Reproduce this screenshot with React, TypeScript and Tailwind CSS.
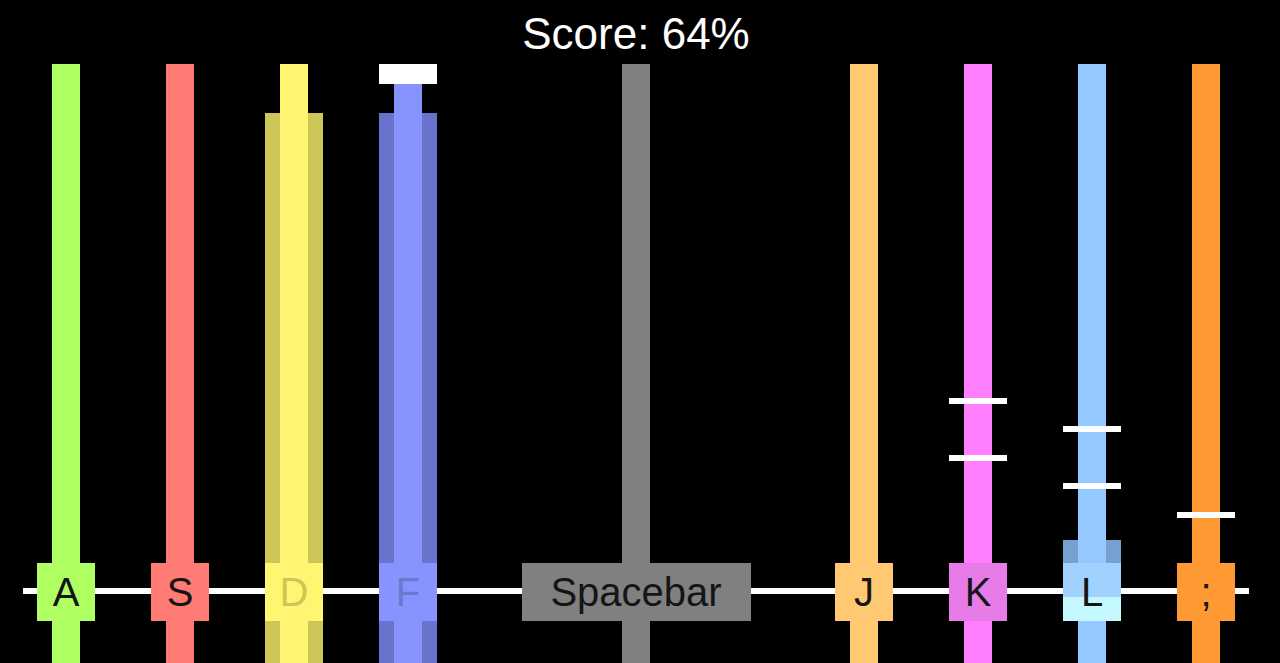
import React from "react";

type Lane = {
  label: string;
  bar: string;
  box: string;
  text: string;
  wide?: string; // wider darker track behind the lane
  cap?: boolean; // white block at the top of the lane
  notes?: number[]; // note offsets from top of the track area
  space?: boolean;
};

// 11 slots of 114px; null = empty slot
const slots: (Lane | null)[] = [
  { label: "A", bar: "bg-[#afff62]", box: "bg-[#afff62]", text: "text-[#151515]" },
  { label: "S", bar: "bg-[#ff7b73]", box: "bg-[#ff7b73]", text: "text-[#151515]" },
  {
    label: "D",
    bar: "bg-[#fff570]",
    box: "bg-[#fff570]",
    text: "text-[#cdc55a]",
    wide: "top-[49px] bottom-0 bg-[#cfc65a]",
  },
  {
    label: "F",
    bar: "bg-[#8794ff]",
    box: "bg-[#8794ff]",
    text: "text-[#6c78cc]",
    wide: "top-[49px] bottom-0 bg-[#6874cc]",
    cap: true,
  },
  null,
  { label: "Spacebar", bar: "bg-[#808080]", box: "bg-[#808080]", text: "text-[#151515]", space: true },
  null,
  { label: "J", bar: "bg-[#ffc972]", box: "bg-[#ffc972]", text: "text-[#151515]" },
  { label: "K", bar: "bg-[#ff7fff]", box: "bg-[#e77ce9]", text: "text-[#151515]", notes: [334, 391] },
  {
    label: "L",
    bar: "bg-[#95c8ff]",
    box: "bg-[linear-gradient(to_bottom,#a1d2ff_34px,#c5f9ff_34px)]",
    text: "text-[#151515]",
    wide: "top-[476px] h-[23px] bg-[#75a0d0]",
    notes: [362, 419],
  },
  { label: ";", bar: "bg-[#ff9933]", box: "bg-[#ff9933]", text: "text-[#151515]", notes: [448] },
];

function LaneColumn({ lane }: { lane: Lane }) {
  return (
    <div className="relative flex h-full w-[114px] shrink-0 flex-col items-center">
      {lane.wide && <div className={`absolute left-[28px] w-[58px] ${lane.wide}`} />}
      <div className={`relative w-[28px] flex-1 ${lane.bar}`} />
      <div
        className={`relative flex h-[58px] shrink-0 items-center justify-center text-[40px] leading-none ${
          lane.space ? "w-[229px]" : "w-[58px]"
        } ${lane.box} ${lane.text}`}
      >
        {lane.label}
      </div>
      <div className={`relative h-[42px] w-[28px] shrink-0 ${lane.bar}`} />
      {lane.cap && <div className="absolute left-[28px] top-0 h-[20px] w-[58px] bg-white" />}
      {lane.notes?.map((t) => (
        <div key={t} className="absolute left-[28px] h-[6px] w-[58px] bg-white" style={{ top: t }} />
      ))}
    </div>
  );
}

export default function App() {
  return (
    <div className="flex h-[663px] w-full flex-col overflow-hidden bg-black font-['Liberation_Sans',Arial,sans-serif]">
      <div className="h-[64px] w-[1272px] shrink-0 pt-[4px] text-center text-[44px] leading-[60px] text-white">
        Score: 64%
      </div>

      <div className="relative flex-1">
        {/* hit line */}
        <div className="absolute left-[23px] top-[524px] h-[6px] w-[1226px] bg-white" />

        <div className="ml-[9px] flex h-full">
          {slots.map((lane, i) =>
            lane ? <LaneColumn key={i} lane={lane} /> : <div key={i} className="h-full w-[114px] shrink-0" />
          )}
        </div>
      </div>
    </div>
  );
}
